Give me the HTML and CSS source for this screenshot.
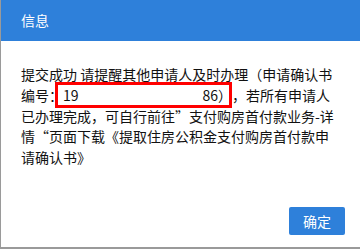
FILE: index.html
```html
<!DOCTYPE html>
<html lang="zh-CN">
<head>
<meta charset="utf-8">
<link rel="stylesheet" href="styles.css">
</head>
<body>
<div class="dialog">
  <div class="header">信息</div>
  <div class="content">提交成功 请提醒其他申请人及时办理（申请确认书编号：<span class="num">19<span class="gap"></span>86）</span>，若所有申请人已办理完成，可自行前往<span class="fw">”</span>支付购房首付款业务-详情<span class="fw">“</span>页面下载《提取住房公积金支付购房首付款申请确认书》</div>
  <div class="footer"><button class="btn">确定</button></div>
</div>
</body>
</html>
```
FILE: styles.css
```css
html, body {
  margin: 0;
  padding: 0;
  background: #fff;
}
body {
  font-family: "Noto Sans CJK SC", sans-serif;
  font-size: 14px;
  text-spacing-trim: space-all;
}
.dialog {
  width: 360px;
  height: 249px;
  box-sizing: border-box;
  border-left: 1px solid #9a9a9a;
  border-bottom: 2px solid #9a9a9a;
  display: flex;
  flex-direction: column;
}
.header {
  height: 41px;
  background: #2e80da;
  color: #fff;
  line-height: 41px;
  padding-left: 20px;
  font-size: 14px;
}
.content {
  flex: 1;
  padding: 23px 20px 0 20px;
  line-height: 20.8px;
  color: #111;
  text-spacing-trim: space-all;
}
.fw {
  font-feature-settings: "fwid" 1;
}
.num {
  position: relative;
}
.num::after {
  content: "";
  position: absolute;
  left: -8px;
  right: 0;
  top: -3px;
  bottom: -3px;
  border: 3px solid #f00;
}
.gap {
  display: inline-block;
  width: 124px;
}
.footer {
  display: flex;
  justify-content: flex-end;
  padding: 0 15px 12px 0;
}
.btn {
  width: 56px;
  height: 28px;
  border: none;
  border-radius: 2px;
  background: #2e80da;
  color: #fff;
  font-family: "Noto Sans CJK SC", sans-serif;
  font-size: 14px;
  padding: 0;
}
```
